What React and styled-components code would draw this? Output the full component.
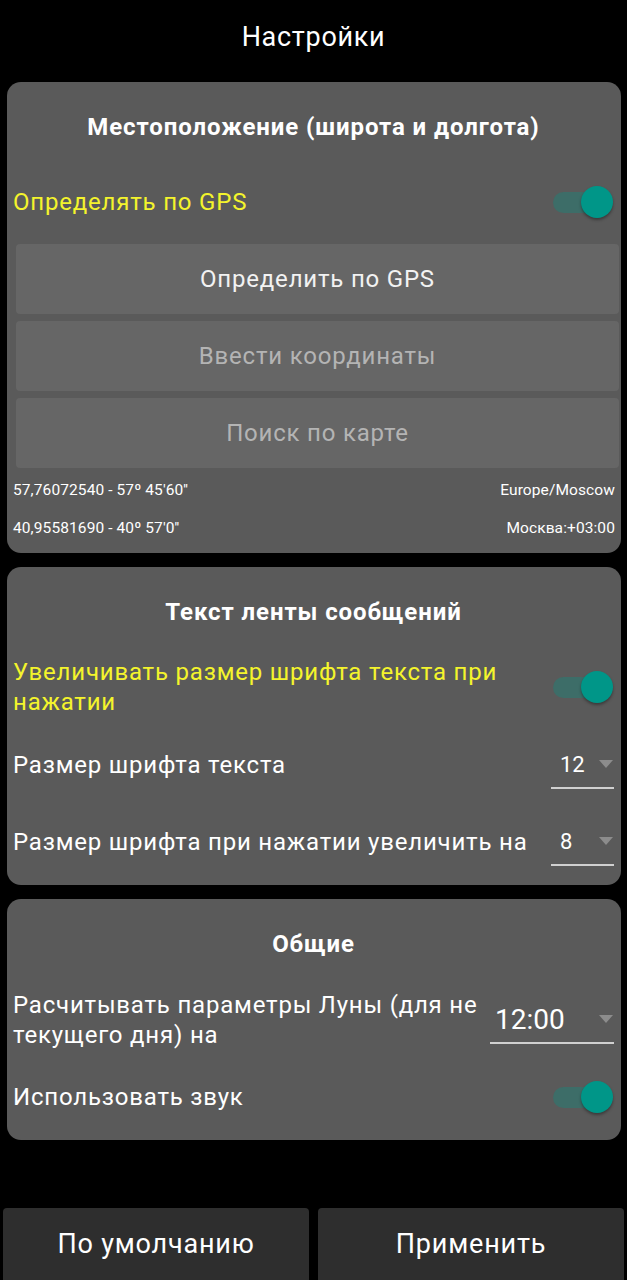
import React from "react";
import styled, { createGlobalStyle } from "styled-components";

const Global = createGlobalStyle`
  html, body { margin: 0; padding: 0; background: #000; }
  body { font-family: Roboto, "Noto Sans", "Liberation Sans", sans-serif; color: #fff; }
  * { box-sizing: border-box; }
`;

const Screen = styled.div`
  width: 627px;
  height: 1280px;
  display: flex;
  flex-direction: column;
  background: #000;
`;

const Title = styled.h1`
  margin: 0;
  padding: 22px 0 30px;
  font-size: 27px;
  font-weight: 400;
  letter-spacing: 0.7px;
  line-height: 30px;
  text-align: center;
  color: #fff;
`;

const Cards = styled.div`
  display: flex;
  flex-direction: column;
  gap: 14px;
  padding: 0 6px 0 7px;
`;

const Card = styled.section`
  background: #5a5a5a;
  border-radius: 14px;
  padding: 0 7px ${(p) => p.$pb || 0}px 6px;
  display: flex;
  flex-direction: column;
`;

const CardTitle = styled.h2`
  margin: 0 0 18px;
  padding-top: 30px;
  font-size: 24px;
  font-weight: 700;
  letter-spacing: 0.9px;
  line-height: 30px;
  text-align: center;
  color: #fff;
`;

const Row = styled.div`
  display: flex;
  align-items: center;
  justify-content: space-between;
  gap: 10px;
  min-height: ${(p) => p.$h}px;
`;

const Label = styled.span`
  font-size: 24px;
  letter-spacing: 0.8px;
  line-height: 30px;
  color: ${(p) => (p.$accent ? "#f4f42c" : "#fff")};
  flex: 1;
`;

const Track = styled.span`
  position: relative;
  flex: none;
  width: 61px;
  height: 32px;
  display: flex;
  align-items: center;
`;

const TrackBar = styled.span`
  width: 52px;
  height: 21px;
  border-radius: 11px;
  background: #3d6d68;
`;

const Thumb = styled.span`
  position: absolute;
  right: 1px;
  top: 0;
  width: 32px;
  height: 32px;
  border-radius: 50%;
  background: #009688;
  box-shadow: 0 2px 3px rgba(0, 0, 0, 0.35);
`;

const Switch = () => (
  <Track>
    <TrackBar />
    <Thumb />
  </Track>
);

const ActionList = styled.div`
  display: flex;
  flex-direction: column;
  gap: 7px;
  margin: 0 -5px 0 3px;
`;

const Action = styled.button`
  height: 70px;
  border: none;
  border-radius: 4px;
  background: #666;
  font-family: inherit;
  font-size: 24px;
  letter-spacing: 0.8px;
  color: ${(p) => (p.$muted ? "#b4b4b4" : "#f2f2f2")};
  padding: 0;
`;

const InfoGrid = styled.div`
  display: grid;
  grid-template-columns: 1fr auto;
  grid-auto-rows: 38px;
  align-items: center;
  margin-top: 3px;
  margin-right: -1px;
  font-size: 15.5px;
  letter-spacing: 0.1px;
  color: #fff;
`;

const InfoRight = styled.span`
  text-align: right;
`;

const SelectRow = styled.div`
  display: flex;
  align-items: center;
  justify-content: space-between;
  gap: ${(p) => p.$gap || 10}px;
  padding: ${(p) => p.$pad || "12px 0 17px"};
`;

const Select = styled.div`
  flex: none;
  position: relative;
  width: ${(p) => p.$w}px;
  height: 48px;
  display: flex;
  align-items: center;
  padding-left: ${(p) => p.$pl}px;
  font-size: ${(p) => p.$fs}px;
  color: #fff;
  border-bottom: 2px solid #d0d0d0;
`;

const Caret = styled.span`
  position: absolute;
  right: 1px;
  top: 50%;
  margin-top: -4px;
  width: 0;
  height: 0;
  border-left: 7px solid transparent;
  border-right: 7px solid transparent;
  border-top: 8px solid #8c8c8c;
`;

const Footer = styled.div`
  margin-top: auto;
  display: grid;
  grid-template-columns: 1fr 1fr;
  gap: 9px;
  padding: 0 3px;
`;

const FooterButton = styled.button`
  height: 72px;
  border: none;
  border-radius: 4px 4px 0 0;
  background: #2e2e2e;
  color: #fff;
  font-family: inherit;
  font-size: 27px;
  letter-spacing: 0.8px;
  padding: 0;
`;

export default function App() {
  return (
    <>
      <Global />
      <Screen>
        <Title>Настройки</Title>
        <Cards>
          <Card $pb={6}>
            <CardTitle>Местоположение (широта и долгота)</CardTitle>
            <Row $h={84}>
              <Label $accent>Определять по GPS</Label>
              <Switch />
            </Row>
            <ActionList>
              <Action>Определить по GPS</Action>
              <Action $muted>Ввести координаты</Action>
              <Action $muted>Поиск по карте</Action>
            </ActionList>
            <InfoGrid>
              <span>57,76072540 - 57º 45'60''</span>
              <InfoRight>Europe/Moscow</InfoRight>
              <span>40,95581690 - 40º 57'0''</span>
              <InfoRight>Москва:+03:00</InfoRight>
            </InfoGrid>
          </Card>

          <Card $pb={2}>
            <CardTitle>Текст ленты сообщений</CardTitle>
            <Row $h={84}>
              <Label $accent>Увеличивать размер шрифта текста при нажатии</Label>
              <Switch />
            </Row>
            <SelectRow>
              <Label>Размер шрифта текста</Label>
              <Select $w={63} $pl={9} $fs={22}>
                12
                <Caret />
              </Select>
            </SelectRow>
            <SelectRow>
              <Label>Размер шрифта при нажатии увеличить на</Label>
              <Select $w={63} $pl={9} $fs={22}>
                8
                <Caret />
              </Select>
            </SelectRow>
          </Card>

          <Card $pb={9}>
            <CardTitle>Общие</CardTitle>
            <SelectRow $pad="13px 0" $gap={6}>
              <Label>Расчитывать параметры Луны (для не текущего дня) на</Label>
              <Select $w={124} $pl={5} $fs={28}>
                12:00
                <Caret />
              </Select>
            </SelectRow>
            <Row $h={68}>
              <Label>Использовать звук</Label>
              <Switch />
            </Row>
          </Card>
        </Cards>
        <Footer>
          <FooterButton>По умолчанию</FooterButton>
          <FooterButton>Применить</FooterButton>
        </Footer>
      </Screen>
    </>
  );
}
